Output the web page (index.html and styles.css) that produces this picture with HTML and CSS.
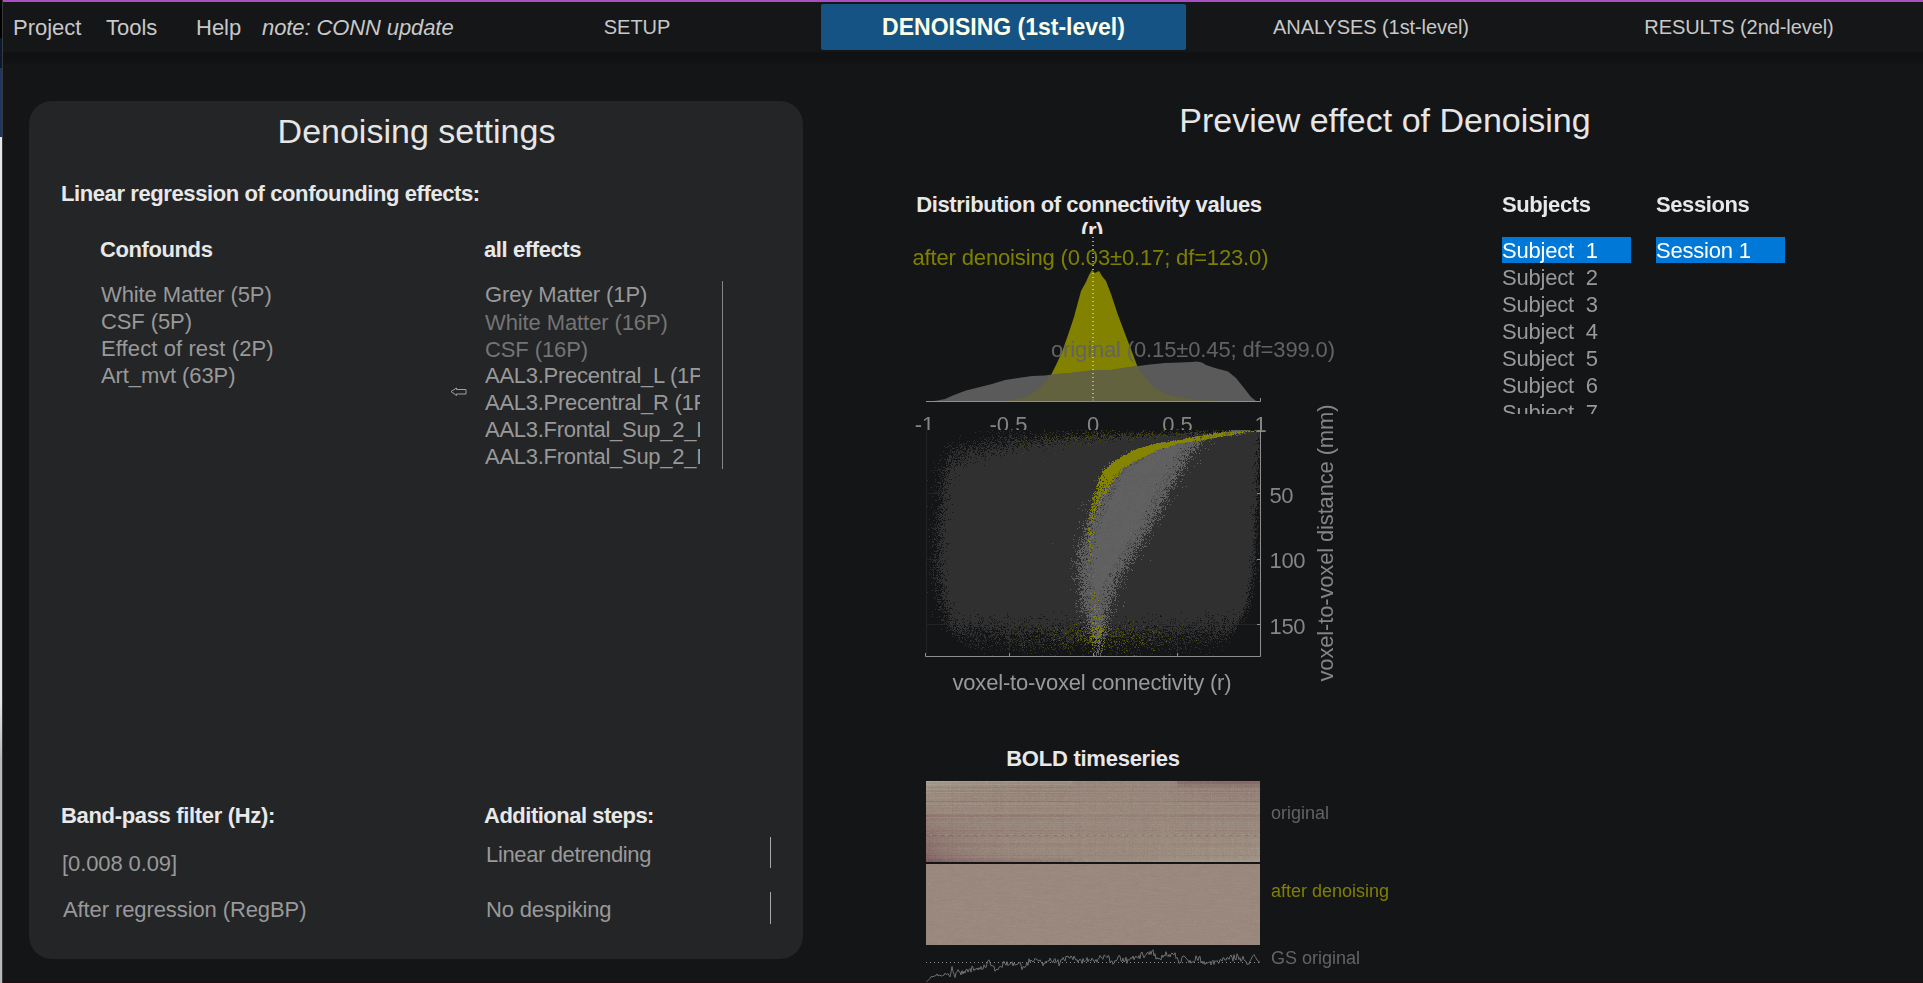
FILE: index.html
```html
<!DOCTYPE html>
<html lang="en">
<head>
<meta charset="utf-8">
<title>CONN - Denoising (1st-level)</title>
<link rel="stylesheet" href="styles.css">
</head>
<body>
<div class="desktop-edge"></div>
<div class="window">
  <header class="topbar">
    <nav class="menus">
      <span class="menu menu-project">Project</span>
      <span class="menu menu-tools">Tools</span>
      <span class="menu menu-help">Help</span>
      <em class="menu menu-note">note: CONN update</em>
    </nav>
    <nav class="tabs">
      <span class="tab tab-setup">SETUP</span>
      <span class="tab tab-active">DENOISING (1st-level)</span>
      <span class="tab">ANALYSES (1st-level)</span>
      <span class="tab">RESULTS (2nd-level)</span>
    </nav>
  </header>

  <main class="content">
    <section class="settings">
      <h1 class="title">Denoising settings</h1>
      <h2 class="heading regression">Linear regression of confounding effects:</h2>
      <div class="effects">
        <div class="confounds">
          <h3 class="heading">Confounds</h3>
          <ul class="list">
            <li>White Matter (5P)</li>
            <li>CSF (5P)</li>
            <li class="wide">Effect of rest (2P)</li>
            <li>Art_mvt (63P)</li>
          </ul>
        </div>
        <svg class="move-arrow" width="17" height="10" viewBox="0 0 17 10"><path d="M1 4.500 L6.500 1 V2.500 H16 V7 H6.500 V8.500 Z"/></svg>
        <div class="all-effects">
          <h3 class="heading">all effects</h3>
          <div class="scroller">
            <ul class="list list-clipped">
              <li>Grey Matter (1P)</li>
              <li class="used used-first">White Matter (16P)</li>
              <li class="used used-last">CSF (16P)</li>
              <li class="atlas">AAL3.Precentral_L (1P)</li>
              <li class="atlas">AAL3.Precentral_R (1P)</li>
              <li class="atlas">AAL3.Frontal_Sup_2_L (1P)</li>
              <li class="atlas">AAL3.Frontal_Sup_2_R (1P)</li>
            </ul>
          </div>
        </div>
      </div>
      <div class="options">
        <div class="bandpass">
          <h3 class="heading heading-band">Band-pass filter (Hz):</h3>
          <div class="field field-range">[0.008 0.09]</div>
          <div class="field field-order">After regression (RegBP)</div>
        </div>
        <div class="steps">
          <h3 class="heading heading-steps">Additional steps:</h3>
          <div class="select select-detrend">Linear detrending</div>
          <div class="select select-despike">No despiking</div>
        </div>
      </div>
    </section>

    <section class="preview">
      <h1 class="title">Preview effect of Denoising</h1>
      <div class="preview-body">
        <div class="plots">
          <h3 class="heading dist-title">Distribution of connectivity values<br><span class="unit">(r)</span></h3>
          <div class="chart">
            <canvas id="scatter" class="scatter" width="335" height="227"></canvas>
            <svg class="chart-overlay" width="449" height="471" viewBox="903 234 449 471">
              <defs>
                <path id="after" d="M986 401.500L1003 401L1015 399.500L1026 397L1036 391L1043 384L1051 375L1056 365L1062 352L1068 335L1074 317L1081 291L1086 282L1089 275L1092 270L1095 273L1099 271L1102 276L1106 281L1111 294L1118 315L1124 331L1132 352L1138 368L1147 380L1156 389L1166 394L1180 397.500L1200 400L1225 401L1240 401.500Z"/>
                <path id="orig" d="M926 401.500L936 400.800L945 399L954 395L966 390.500L980 387L992 384L1005 380L1018 378L1032 376L1045 375.500L1056 374L1070 373L1090 370.500L1110 370L1130 367L1150 364.500L1165 363L1180 362.500L1192 362L1197 361.500L1202 362.500L1206 365L1215 368L1228 371.500L1236 378L1244 388L1251 397L1256 401L1260 401.500Z"/>
                <clipPath id="afterClip"><use href="#after"/></clipPath>
                <clipPath id="tickClip"><rect x="905" y="410" width="350" height="20"/><rect x="1255" y="410" width="15" height="22"/></clipPath>
              </defs>
              <use href="#after" class="fill-after"/>
              <use href="#orig" class="fill-orig"/>
              <use href="#orig" class="fill-overlap" clip-path="url(#afterClip)"/>
              <path class="zero" d="M1093 237V402"/>
              <path class="axis" d="M926 401.500H1260.500V398M1093 401.500V399"/>
              <text class="t-after" x="912.500" y="265" textLength="356">after denoising (0.03±0.17; df=123.0)</text>
              <text class="t-orig" x="1051" y="357" textLength="284">original (0.15±0.45; df=399.0)</text>
              <g class="t-tick" text-anchor="middle" clip-path="url(#tickClip)">
                <text x="924.500" y="432">-1</text>
                <text x="1008.500" y="432">-0.5</text>
                <text x="1093" y="432">0</text>
                <text x="1177.500" y="432">0.5</text>
                <text x="1260.500" y="432">1</text>
              </g>
              <path class="axis" d="M925.500 653V656.500H1260.500V430M1009.500 656V653M1093.500 656V653M1177.500 656V653M1257 493.500H1260M1257 559.500H1260M1257 624.500H1260"/>
              <g class="t-tick">
                <text x="1269.500" y="503" textLength="24">50</text>
                <text x="1269.500" y="568" textLength="36">100</text>
                <text x="1269.500" y="634" textLength="36">150</text>
                <text transform="translate(1333 681.500) rotate(-90)" textLength="277">voxel-to-voxel distance (mm)</text>
              </g>
              <text class="t-label" x="952.500" y="690" textLength="279">voxel-to-voxel connectivity (r)</text>
            </svg>
          </div>
          <h3 class="heading bold-title">BOLD timeseries</h3>
          <div class="series">
            <canvas id="boldBefore" width="334" height="81"></canvas>
            <span class="label label-before">original</span>
            <canvas id="boldAfter" width="334" height="81"></canvas>
            <span class="label label-after">after denoising</span>
            <svg class="gs" width="334" height="38" viewBox="926 945 334 38">
              <path class="gs-mean" d="M926 962.500H1260"/>
              <polyline id="gsLine" class="gs-line"/>
            </svg>
            <span class="label label-gs">GS original</span>
          </div>
        </div>
        <div class="picker">
          <h3 class="heading">Subjects</h3>
          <ul class="list picks">
            <li class="selected">Subject&nbsp; 1</li>
            <li>Subject&nbsp; 2</li>
            <li>Subject&nbsp; 3</li>
            <li>Subject&nbsp; 4</li>
            <li>Subject&nbsp; 5</li>
            <li>Subject&nbsp; 6</li>
            <li>Subject&nbsp; 7</li>
          </ul>
        </div>
        <div class="picker">
          <h3 class="heading">Sessions</h3>
          <ul class="list picks">
            <li class="selected">Session 1</li>
          </ul>
        </div>
      </div>
    </section>
  </main>
</div>
<script src="plots.js"></script>
</body>
</html>
```

FILE: styles.css
```css
* { box-sizing: border-box; margin: 0; padding: 0; }

body {
  display: flex;
  width: 1923px;
  height: 983px;
  overflow: hidden;
  background: #141517;
  color: #999;
  font: 22px/27px "Liberation Sans", Arial, sans-serif;
  white-space: nowrap;
}

.desktop-edge {
  flex: none;
  width: 3px;
  border-right: 1px solid #3a3a3c;
  background: linear-gradient(#000 0 38px, #0a1930 38px 68px, #1c3763 68px 137px, #e6e6e6 137px 700px, #b9b9b9 760px);
}

.window { display: flex; flex-direction: column; flex: 1; border-top: 2px solid #a94fc4; border-bottom: 1px solid #1c0f12; }

.topbar {
  display: flex;
  flex: none;
  height: 50px;
  background: #151618;
}
.menus { display: flex; width: 453px; padding: 12px 0 0 10px; color: #c8c8c8; }
.menu-project { width: 93px; }
.menu-tools { width: 90px; }
.menu-help { width: 66px; }
.menu-note { letter-spacing: -0.1px; }

.tabs { display: grid; grid-template-columns: 365px 365px 370px 366px; height: 45px; margin-top: 2px; }
.tab { padding-top: 1px; color: #c8c8c8; font-size: 20px; line-height: 45px; text-align: center; letter-spacing: -0.08px; }
.tab-setup { padding-right: 3px; }
.tab-active { padding-top: 0; border-radius: 2px; background: #155385; color: #ffffe8; font-size: 23px; line-height: 46px; font-weight: bold; letter-spacing: 0; }

.content { display: flex; flex: 1; min-height: 0; background: linear-gradient(#101113 0 8px, #141517 14px); }

.title { color: #e6e6e6; font-size: 34px; font-weight: normal; line-height: 40px; text-align: center; }
.heading { color: #e8e8e8; font-size: 22px; font-weight: bold; line-height: 27px; letter-spacing: -0.4px; }
.list { list-style: none; letter-spacing: -0.1px; }

.settings {
  display: flex;
  flex-direction: column;
  flex: none;
  width: 774px;
  height: 858px;
  margin: 49px 0 0 26px;
  padding: 10px 32px 35px;
  border-radius: 23px;
  background: #242527;
}
.settings .title { padding-left: 1px; }
.regression { margin-top: 29px; }
.effects { display: flex; margin-top: 29px; padding-left: 39px; }
.confounds { width: 350px; }
.confounds .list, .all-effects .list { padding-left: 1px; }
.confounds .list, .scroller { margin-top: 18px; }
.wide { letter-spacing: 0.1px; }
.move-arrow { margin-top: 151px; margin-right: 17px; fill: none; stroke: #a0a0a0; stroke-width: 1; }
.scroller { width: 239px; height: 188px; border-right: 1px solid #85868c; }
.list-clipped { width: 216px; overflow: hidden; }
.atlas { letter-spacing: -0.28px; }
.used { color: #747474; }
.used-first { margin-top: 1px; }
.used-last { margin-bottom: -1px; }

.options { display: flex; margin-top: auto; }
.bandpass { width: 423px; }
.heading-band { letter-spacing: -0.33px; }
.heading-steps { letter-spacing: -0.5px; }
.field { padding-left: 1px; letter-spacing: -0.1px; }
.field-range { margin-top: 21px; }
.field-order { margin-top: 19px; margin-bottom: -1px; padding-left: 2px; }
.select { width: 287px; padding-left: 2px; border-right: 1px solid #a9a9a9; letter-spacing: -0.36px; }
.select-detrend { height: 31px; margin-top: 8px; padding-top: 4px; }
.select-despike { height: 32px; margin-top: 24px; padding-top: 4px; letter-spacing: -0.15px; }

.preview { flex: 1; padding-top: 48px; }
.preview .title { padding-left: 44px; }
.preview-body { display: flex; margin-top: 51px; padding-left: 100px; }
.plots { width: 599px; }
.dist-title { width: 372px; height: 43px; padding-top: 1px; line-height: 26px; text-align: center; overflow: hidden; }
.unit { padding-left: 6px; }

.chart { position: relative; width: 449px; height: 471px; }
.chart-overlay, .scatter { position: absolute; left: 0; top: 0; font-size: 22px; }
.scatter { left: 23px; top: 196px; }
.fill-after { fill: #828200; }
.fill-orig { fill: #5a5a5a; }
.fill-overlap { fill: #62623f; }
.zero { stroke: #d0d0b8; stroke-width: 1.5; stroke-dasharray: 1 3; fill: none; }
.axis { stroke: #8e8e8e; fill: none; }
.t-after { fill: #808000; }
.t-orig { fill: #636363; }
.t-tick { fill: #858585; }
.t-label { fill: #999; }

.bold-title { width: 380px; margin-top: 40px; text-align: center; letter-spacing: -0.25px; }
.series { display: grid; grid-template-columns: 334px 150px; grid-template-rows: 81px 81px 36px; row-gap: 2px; column-gap: 11px; margin: 9px 0 0 23px; }
.series canvas { display: block; }
.label { font-size: 18px; line-height: 22px; color: #636363; }
.label-before { padding-top: 21px; }
.label-after { padding-top: 16px; color: #808000; }
.gs { margin-top: -2px; overflow: hidden; }
.gs-mean { stroke: #8a8a8a; stroke-dasharray: 1 3; }
.gs-line { fill: none; stroke: #707070; stroke-width: 1; }

.picker { width: 154px; }
.picks { width: 129px; height: 177px; margin-top: 19px; overflow: hidden; letter-spacing: -0.2px; }
.picks li { height: 27px; }
.picks .selected { height: 26px; margin-bottom: 1px; background: #0078d7; color: #fff; }
```

FILE: plots.js
```javascript
// Small seeded generator so the plots look the same on every load.
let seed = 20240;
function rnd() {
  seed = (seed + 0x6d2b79f5) | 0;
  let t = Math.imul(seed ^ (seed >>> 15), 1 | seed);
  t = (t + Math.imul(t ^ (t >>> 7), 61 | t)) ^ t;
  return ((t ^ (t >>> 14)) >>> 0) / 4294967296;
}
function gauss() { return rnd() + rnd() + rnd() + rnd() - 2; }
function sig(v) { return 1 / (1 + Math.exp(-v)); }
function interp(pts, v) {
  if (v <= pts[0][0]) return pts[0].slice(1);
  for (let i = 1; i < pts.length; i++) {
    if (v <= pts[i][0]) {
      const a = pts[i - 1], b = pts[i], k = (v - a[0]) / (b[0] - a[0]);
      return a.slice(1).map((n, j) => n + (b[j + 1] - n) * k);
    }
  }
  return pts[pts.length - 1].slice(1);
}
function paint(id, pick) {
  const c = document.getElementById(id), ctx = c.getContext('2d');
  const img = ctx.createImageData(c.width, c.height);
  for (let y = 0; y < c.height; y++) for (let x = 0; x < c.width; x++) {
    const p = pick(x, y);
    if (p) img.data.set([p[0], p[1], p[2], 255], (y * c.width + x) * 4);
  }
  ctx.putImageData(img, 0, 0);
}

const cloudTop = [[0, 38, 15], [25, 27, 14], [45, 20, 12], [80, 13, 10], [130, 8, 7], [200, 5, 4], [260, 3, 2.500], [335, 0, 1]];
const cloudSide = [[0, 40, 334], [12, 22, 333], [30, 18, 332], [60, 16, 331], [100, 13, 329], [130, 12, 328], [155, 14, 325], [175, 17, 321], [190, 21, 313], [205, 28, 304], [226, 50, 290]];
// y, left edge, right edge, softness
const plume = [[0, 305, 325, 2], [5, 277, 302, 3], [10, 250, 278, 3], [20, 218, 266, 3], [40, 186, 254, 3], [63, 174, 242, 2.700], [90, 162, 228, 2.700], [120, 154, 210, 3], [150, 153, 191, 3], [180, 158, 182, 3], [200, 165, 177, 2.500], [216, 170, 173, 2]];
// y, left edge, right edge, density
const ridge = [[0, 316, 334, .3], [2, 292, 320, .6], [5, 276, 300, .8], [10, 249, 275, .97], [13, 229, 252, 1], [20, 206, 230, 1], [30, 189, 210, 1], [40, 177, 194, 1], [50, 172, 186, .9], [60, 170, 181, .7], [75, 165, 173, .45], [90, 162, 168, .3], [120, 160, 167, .1], [150, 160, 168, 0], [180, 165, 176, .12], [205, 164, 177, .4], [216, 164, 178, .1], [222, 168, 172, 0]];

paint('scatter', (x, y) => {
  const rg = interp(ridge, y);
  if (x > rg[0] + gauss() * 2 && x < rg[1] + gauss() * 2 && rnd() < rg[2]) return [132, 132, 0];
  const pl = interp(plume, y);
  if (rnd() < sig((x - pl[0]) / pl[2]) * sig((pl[1] - x) / pl[2])) {
    const edge = Math.min(x - pl[0], pl[1] - x);
    const g = edge < 14 && rnd() < .25 ? 80 : 96 + gauss() * 3;
    return [g, g, g];
  }
  const low = Math.exp(-Math.pow((x - 172) / 46, 2) - Math.pow((y - 206) / 10, 2));
  if (rnd() < low * .36) return rnd() < .35 ? [92, 92, 4] : [62, 62, 10];
  const t = interp(cloudTop, x), s = interp(cloudSide, y);
  if (x > 70 && rnd() < Math.exp(-Math.pow((y - t[0]) / (t[1] + 1), 2)) * .18 * Math.min(1, (x - 70) / 100)) return [70, 70, 12];
  const floor = 204 - Math.pow(Math.abs(x - 170) / 170, 3) * 6;
  const p = sig((x - s[0]) / 3.300) * sig((s[1] - x) / 1.800) * sig((y - t[0]) / t[1] * 2.200) * sig((floor - y) / 6.500);
  if (rnd() < p * 1.02) {
    const g = 48 + gauss();
    return [g, g, g];
  }
  if (x === 0 || x === 83 || x === 167 || x === 251 || y === 63 || y === 129 || y === 194) return [34, 35, 36];
  return null;
});

const rows = Array.from({ length: 81 }, () => gauss() * 5 + (rnd() < .12 ? 8 : 0));
const cols = Array.from({ length: 334 }, () => gauss() * 3);
paint('boldBefore', (x, y) => {
  const u = x / 334, v = y / 81;
  let n = gauss() * 5 + rows[y] * (u < .44 ? 1 : u < .75 ? .6 : .9) + cols[x] * .6;
  n += (v - .3) * 46 * Math.exp(-u * 8);
  n += Math.max(0, v - .93) / .07 * (u < .44 ? 16 - u * 12 : -18 * (u - .3));
  n += Math.max(0, .08 - v) / .08 * (u < .44 ? -8 : u > .75 ? 24 : 0);
  if (u > .6) n += (.5 - v) * 30 * (u - .6);
  if (y === 54 && x % 4 < 2) n += x % 8 < 4 ? 14 : -14;
  return [153 - n * .700, 136 - n * 1.100, 125 - n * .800];
});
const streak = Array.from({ length: 81 }, () => 0);
paint('boldAfter', (x, y) => {
  streak[y] = streak[y] * .7 + gauss() * 2;
  const n = streak[y] + (y === 57 ? gauss() * 7 : 0);
  return [154 - n * .8, 136 - n, 126 - n];
});

const gs = [[926, 982.500], [931, 977], [937, 975], [942, 976], [947, 973], [950, 975], [952, 967], [954, 977], [958, 971], [964, 973], [973, 967], [983, 968], [989, 962], [994, 968], [999, 969.500], [1004, 964.500], [1011, 963], [1019, 965], [1023, 968], [1028, 962], [1038, 960], [1045, 963.500], [1052, 960], [1059, 963], [1066, 958], [1071, 956.500], [1080, 961], [1087, 959.500], [1097, 960], [1107, 956.500], [1113, 963.500], [1118, 957.500], [1128, 959.500], [1138, 956.500], [1149, 954], [1153, 951.500], [1157, 958.500], [1166, 956], [1175, 953], [1179, 963.500], [1183, 957.500], [1193, 962], [1197, 957], [1204, 963.500], [1214, 962], [1224, 959.500], [1231, 957], [1241, 958.500], [1248, 963.500], [1255, 955.500], [1260, 963.500]];
const line = [];
for (let x = 926; x <= 1260; x += 1) line.push(x + ',' + (interp(gs, x)[0] + gauss() * 3 * Math.min(1, (x - 925) / 40)).toFixed(1));
document.getElementById('gsLine').setAttribute('points', line.join(' '));
```
